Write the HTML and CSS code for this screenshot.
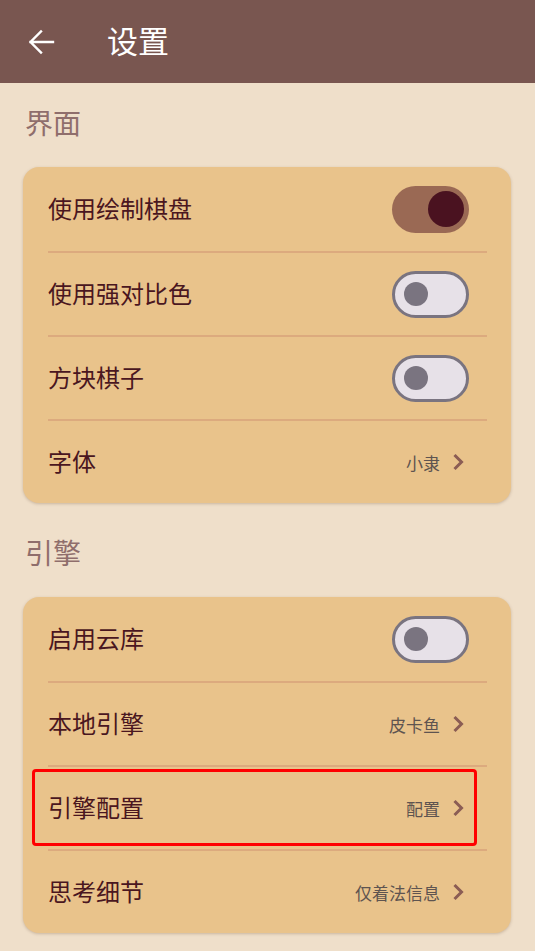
FILE: index.html
```html
<!DOCTYPE html>
<html lang="zh-CN">
<head>
<meta charset="utf-8">
<title>设置</title>
<link rel="stylesheet" href="styles.css">
</head>
<body>
<header class="appbar">
  <svg class="back" width="36" height="36" viewBox="0 0 24 24" aria-hidden="true">
    <path d="M20 12H5M12 5l-7 7 7 7" fill="none" stroke="#fff" stroke-width="1.6" stroke-linecap="square"/>
  </svg>
  <h1 class="title">设置</h1>
</header>
<main class="content">
  <h2 class="section">界面</h2>
  <section class="card">
    <div class="row"><span class="label">使用绘制棋盘</span><span class="switch on"><span class="knob"></span></span></div>
    <div class="row"><span class="label">使用强对比色</span><span class="switch"><span class="knob"></span></span></div>
    <div class="row"><span class="label">方块棋子</span><span class="switch"><span class="knob"></span></span></div>
    <div class="row"><span class="label">字体</span><span class="value">小隶<svg class="chev" width="12" height="18" viewBox="0 0 12 18"><path d="M2.5 2l7 7-7 7" fill="none" stroke="#8b5d54" stroke-width="3"/></svg></span></div>
  </section>
  <h2 class="section">引擎</h2>
  <section class="card">
    <div class="row"><span class="label">启用云库</span><span class="switch"><span class="knob"></span></span></div>
    <div class="row"><span class="label">本地引擎</span><span class="value">皮卡鱼<svg class="chev" width="12" height="18" viewBox="0 0 12 18"><path d="M2.5 2l7 7-7 7" fill="none" stroke="#8b5d54" stroke-width="3"/></svg></span></div>
    <div class="row"><span class="label">引擎配置</span><span class="value">配置<svg class="chev" width="12" height="18" viewBox="0 0 12 18"><path d="M2.5 2l7 7-7 7" fill="none" stroke="#8b5d54" stroke-width="3"/></svg></span><span class="highlight"></span></div>
    <div class="row"><span class="label">思考细节</span><span class="value">仅着法信息<svg class="chev" width="12" height="18" viewBox="0 0 12 18"><path d="M2.5 2l7 7-7 7" fill="none" stroke="#8b5d54" stroke-width="3"/></svg></span></div>
  </section>
</main>
</body>
</html>
```
FILE: styles.css
```css
* { box-sizing: border-box; }
html, body { margin: 0; padding: 0; }
body {
  background: #efdfca;
  font-family: "Noto Sans CJK SC", "Noto Sans", sans-serif;
  width: 535px;
  height: 951px;
  overflow: hidden;
}
.appbar {
  height: 83px;
  background: #795650;
  display: flex;
  align-items: center;
  padding-left: 23px;
}
.back { display: block; }
.title {
  margin: 0 0 0 48px;
  padding-bottom: 4px;
  color: #fff;
  font-size: 31px;
  font-weight: 400;
  line-height: 1;
}
.content { padding: 0 24px 0 23px; }
.section {
  margin: 0;
  padding: 21px 0 27px 2px;
  line-height: 36px;
  font-size: 28px;
  font-weight: 400;
  color: #8f6e6c;
}
.card {
  background: #e9c38b;
  border-radius: 16px;
  box-shadow: 0 1px 3px rgba(90, 60, 30, 0.25);
  margin-bottom: 10px;
  padding: 0 24px 0 25px;
}
.row {
  position: relative;
  height: 84px;
  display: flex;
  align-items: center;
  justify-content: space-between;
}
.row + .row { border-top: 2px solid #dcaa7e; }
.label {
  font-size: 24px;
  color: #4a1620;
  padding-bottom: 4px;
}
.value {
  display: flex;
  align-items: center;
  font-size: 17px;
  color: #5e5450;
  margin-right: 23px;
}
.chev { margin-left: 12px; display: block; }
.switch {
  width: 77px;
  height: 47px;
  border-radius: 24px;
  background: #e7e1e8;
  border: 3px solid #7a7480;
  display: flex;
  align-items: center;
  padding-left: 9px;
  margin-right: 18px;
}
.switch .knob {
  width: 24px;
  height: 24px;
  border-radius: 50%;
  background: #7a7480;
}
.switch.on {
  background: #9a6954;
  border: none;
  justify-content: flex-end;
  padding: 0 5px 0 0;
}
.switch.on .knob {
  width: 36px;
  height: 36px;
  background: #4a1220;
}
.highlight {
  position: absolute;
  left: -16px;
  right: 10px;
  top: 2px;
  bottom: 3px;
  border: 3.5px solid #f00;
  border-radius: 4px;
}
```
